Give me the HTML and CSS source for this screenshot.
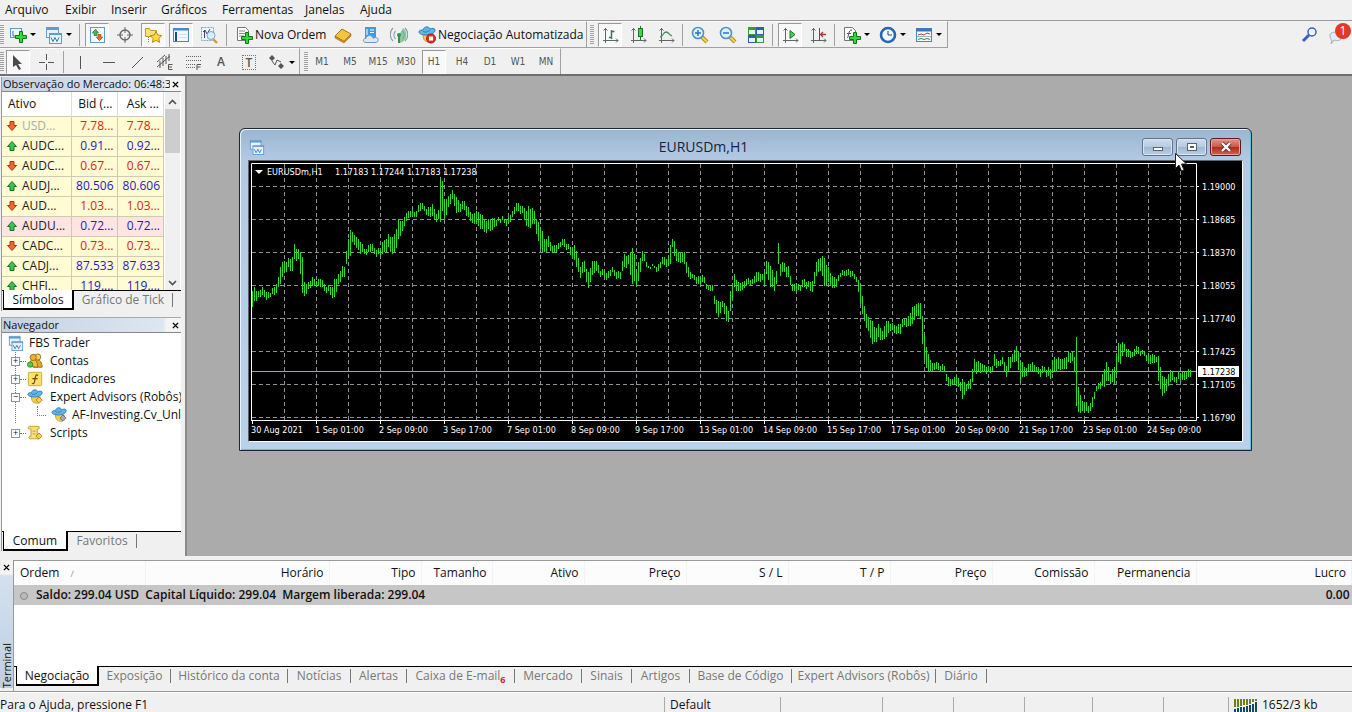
FILE: index.html
```html
<!DOCTYPE html>
<html lang="pt">
<head>
<meta charset="utf-8">
<title>FBS Trader</title>
<link rel="stylesheet" href="styles.css">
</head>
<body>
<svg class="defs" aria-hidden="true">
  <symbol id="plus" viewBox="0 0 12 12"><path d="M4.500 .5h3v4h4v3h-4v4h-3v-4h-4v-3h4z" fill="#35d83c" stroke="#0b7a17"/></symbol>
  <symbol id="bars" viewBox="0 0 18 18"><path d="M4.500 2v15M2 14.500h15M2.500 4.500l2-2 2 2M15 12.500l2 2-2 2" fill="none" stroke="#5a6a66"/></symbol>
  <symbol id="charts" viewBox="0 0 18 18"><rect x="1.500" y="1.500" width="12" height="10" fill="#e6f3fd" stroke="#5d9bd0"/><path d="M1 3h13" stroke="#5d9bd0" stroke-width="2"/><rect x="4.500" y="7.500" width="12" height="10" fill="#e6f3fd" stroke="#5d9bd0"/><path d="M4 8.500h13" stroke="#5d9bd0"/><path d="M6 11.500l2 4 2-4 2 4 2-4" fill="none" stroke="#3e78b4"/></symbol>
  <symbol id="hat" viewBox="0 0 18 18"><path d="M5 8c0 6 2 8 6 8 3 0 4-3 4-7z" fill="#f4cf4a" stroke="#c69a2c"/><path d="M1 6c0-2 3-2 4-2 1-4 6-4 7-1 2-1 5-1 5 1 0 4-6 5-9 5S1 8 1 6z" fill="#62b4e6" stroke="#2d7cb8"/><path d="M5 5c2 2 5 1 7-1" fill="none" stroke="#2d7cb8"/></symbol>
  <symbol id="down" viewBox="0 0 10 10"><path d="M3 .5h4v4h2.500L5 9.500.5 4.500H3z" fill="#ee6a34" stroke="#a8370e"/></symbol>
  <symbol id="up" viewBox="0 0 10 10"><path d="M3 9.500h4v-4h2.500L5 .5.5 5.500H3z" fill="#3fbf55" stroke="#12762a"/></symbol>
  <symbol id="lens" viewBox="0 0 18 18"><path d="M11 11l5 5" stroke="#b88a1c" stroke-width="4"/><path d="M11 11l5 5" stroke="#f2d25a" stroke-width="2"/><circle cx="7" cy="7" r="5.500" fill="#dff1fd" stroke="#4a93cf" stroke-width="1.600"/></symbol>
</svg>

<div class="app">
  <nav class="menubar">
    <button>Arquivo</button><button>Exibir</button><button>Inserir</button><button>Gráficos</button><button>Ferramentas</button><button>Janelas</button><button>Ajuda</button>
  </nav>

  <div class="toolrow toolrow-main">
    <div class="toolgroup first">
      <i class="grip"></i>
      <button class="tool drop" aria-label="Novo gráfico"><svg class="ic" viewBox="0 0 18 18"><rect x="1.500" y="2.500" width="11" height="9" fill="#edf6fd" stroke="#5d9bd0"/><path d="M4 5v5h6" fill="none" stroke="#3e78b4"/><use href="#plus" x="6" y="5" width="12" height="12"/></svg><i class="caret"></i></button>
      <button class="tool drop" aria-label="Perfis"><svg class="ic"><use href="#charts"/></svg><i class="caret"></i></button>
      <i class="sep"></i>
      <button class="tool on" aria-label="Observação do Mercado"><svg class="ic" viewBox="0 0 18 18"><rect x="2.500" y="1.500" width="14" height="15" fill="#f6fbff" stroke="#5d9bd0"/><use href="#up" x="4" y="3" width="7" height="7"/><use href="#down" x="8" y="8" width="7" height="7"/></svg></button>
      <button class="tool" aria-label="Janela de dados"><svg class="ic" viewBox="0 0 18 18"><circle cx="9" cy="9" r="5" fill="none" stroke="#666" stroke-width="1.400"/><path d="M9 1v6M9 11v6M1 9h6M11 9h6" stroke="#666"/></svg></button>
      <button class="tool on" aria-label="Navegador"><svg class="ic" viewBox="0 0 18 18"><path d="M1.500 10.500v-8h4l1 2h6v6z" fill="#f9e17a" stroke="#c39a26"/><path d="M4.500 11v6" stroke="#777" stroke-dasharray="1 1"/><path d="M12 5.500l1.800 3.500 4 .6-3 2.800.8 4-3.600-2-3.600 2 .8-4-3-2.800 4-.6z" fill="#ffd93b" stroke="#b88a1c"/></svg></button>
      <button class="tool on" aria-label="Terminal"><svg class="ic" viewBox="0 0 18 18"><rect x="1.500" y="2.500" width="15" height="13" fill="#f2f8ff" stroke="#4a88cc"/><path d="M2 3.500h14" stroke="#4a88cc" stroke-width="2"/><path d="M4 6v9" stroke="#1d4a94" stroke-width="2"/><path d="M7 8.500h8M7 11.500h8" stroke="#cfdff0"/></svg></button>
      <button class="tool" aria-label="Testador"><svg class="ic" viewBox="0 0 18 18"><rect x="1.500" y="1.500" width="12" height="13" fill="#edf4fb" stroke="#7aa3cb" stroke-dasharray="2 1"/><path d="M4.500 4v8M3 6l2-2 2 4 3-5" fill="none" stroke="#446"/><path d="M13 13l4 4" stroke="#c9a227" stroke-width="2.400"/><circle cx="11" cy="9.500" r="4" fill="#d8edfb" stroke="#7aa3cb"/></svg></button>
      <i class="sep"></i>
      <button class="tool wide order"><svg class="ic" viewBox="0 0 18 18"><path d="M2.500 1.500h8l3 3v10h-11z" fill="#fff" stroke="#777"/><path d="M4 5h6M4 7.500h7M4 10h5" stroke="#888"/><use href="#plus" x="6" y="6" width="12" height="12"/></svg><span>Nova Ordem</span></button>
      <button class="tool" aria-label="MetaEditor"><svg class="ic" viewBox="0 0 18 18"><path d="M1 10l7-7 9 5-7 8z" fill="#f3c53c" stroke="#a8741a"/><path d="M1 10v2l9 5 7-7V8l-7 7z" fill="#c98d1f" stroke="#a8741a" stroke-width=".6"/></svg></button>
      <button class="tool" aria-label="Nuvem"><svg class="ic" viewBox="0 0 18 18"><rect x="3" y="1" width="11" height="11" fill="#3c9be3"/><path d="M5 3v6M8 4h4M8 6.500h4" stroke="#fff"/><path d="M4 16.500c-4 0-3-5 0-4 0-4 7-4 7 0 2-2 6-1 5 2 0 2-2 2-3 2z" fill="#dbe8f4" stroke="#7397bb"/></svg></button>
      <button class="tool" aria-label="Sinais"><svg class="ic" viewBox="0 0 18 18"><path d="M9 9v8c9-1 9-12 4-15z" fill="#8fc79a"/><circle cx="9" cy="9" r="2" fill="#2c9547"/><path d="M5.500 5a6 6 0 0 0 0 8M12.500 5a6 6 0 0 1 0 8M3 2a9 9 0 0 0 0 13M15 2a9 9 0 0 1 0 13" fill="none" stroke="#7fa3b5" stroke-width="1.200"/><path d="M9 10v7" stroke="#2c9547" stroke-width="2"/></svg></button>
      <button class="tool wide auto"><svg class="ic" viewBox="0 0 18 18"><use href="#hat"/><circle cx="13" cy="12.500" r="4.500" fill="#dd3526" stroke="#991b12"/><rect x="11" y="10.500" width="4" height="4" fill="#fff"/></svg><span>Negociação Automatizada</span></button>
    </div>
    <div class="toolgroup second">
      <i class="grip"></i>
      <button class="tool on" aria-label="Gráfico de barras"><svg class="ic" viewBox="0 0 18 18"><use href="#bars"/><path d="M10.500 4v9M10.500 5.500h3M8 11.500h3" stroke="#3d7a50" stroke-width="1.500"/></svg></button>
      <button class="tool" aria-label="Candles"><svg class="ic" viewBox="0 0 18 18"><use href="#bars"/><path d="M11.500 0v14" stroke="#17772a"/><rect x="9.500" y="2.500" width="4" height="8" fill="#39d549" stroke="#17772a"/></svg></button>
      <button class="tool" aria-label="Linha"><svg class="ic" viewBox="0 0 18 18"><use href="#bars"/><path d="M3 11c3 0 3-5 6-5s3 3 6 4" fill="none" stroke="#4c8a5c" stroke-width="1.300"/></svg></button>
      <i class="sep"></i>
      <button class="tool" aria-label="Ampliar"><svg class="ic" viewBox="0 0 18 18"><use href="#lens"/><path d="M4 7h6M7 4v6" stroke="#2f73b5" stroke-width="1.500"/></svg></button>
      <button class="tool" aria-label="Reduzir"><svg class="ic" viewBox="0 0 18 18"><use href="#lens"/><path d="M4 7h6" stroke="#2f73b5" stroke-width="1.500"/></svg></button>
      <button class="tool" aria-label="Organizar janelas"><svg class="ic" viewBox="0 0 18 18"><path d="M1 1h8v8H1zM9 9h8v8H9z" fill="#3a9a35"/><path d="M9 1h8v8H9zM1 9h8v8H1z" fill="#2c5fb0"/><path d="M2 4h6v4H2zM10 4h6v4h-6zM2 12h6v4H2zM10 12h6v4h-6z" fill="#e9f2f4"/></svg></button>
      <i class="sep"></i>
      <button class="tool on" aria-label="Rolagem automática"><svg class="ic" viewBox="0 0 18 18"><use href="#bars"/><path d="M9 4.500l5 4-5 4z" fill="#3ecf4c" stroke="#207a2c"/></svg></button>
      <button class="tool" aria-label="Deslocar gráfico"><svg class="ic" viewBox="0 0 18 18"><use href="#bars"/><path d="M10.500 2v13" stroke="#555"/><path d="M17 8.500h-5M14 6l-2.500 2.500L14 11" fill="none" stroke="#b5372a" stroke-width="1.300"/></svg></button>
      <i class="sep"></i>
      <button class="tool drop" aria-label="Indicadores"><svg class="ic" viewBox="0 0 18 18"><path d="M1.500 1.500h8l3 3v10h-11z" fill="#fff" stroke="#6b7a77"/><path d="M4 12c2 0 1-9 5-8M4 7.500h4" fill="none" stroke="#555"/><use href="#plus" x="6" y="6" width="12" height="12"/></svg><i class="caret"></i></button>
      <button class="tool drop" aria-label="Períodos"><svg class="ic" viewBox="0 0 18 18"><circle cx="9" cy="9" r="7" fill="#f1f8fd" stroke="#2666b4" stroke-width="2.600"/><path d="M9 5v4h4" fill="none" stroke="#445"/></svg><i class="caret"></i></button>
      <button class="tool drop" aria-label="Modelos"><svg class="ic" viewBox="0 0 18 18"><rect x="1.500" y="2.500" width="15" height="13" fill="#f7fbff" stroke="#4b86c5"/><path d="M1 4h16" stroke="#3c74b4" stroke-width="3"/><path d="M3 9l3-1 3 1 3-2 3 1" fill="none" stroke="#a2463d"/><path d="M2 10.500h14" stroke="#9bb"/><path d="M3 13.500l3-1 3 1 3-1 3 1" fill="none" stroke="#3b8a48"/></svg><i class="caret"></i></button>
    </div>
    <div class="corner">
      <button class="tool" aria-label="Buscar"><svg class="ic" viewBox="0 0 18 18"><circle cx="11" cy="6" r="4" fill="#eef3ff" stroke="#3f5fc0" stroke-width="1.500"/><path d="M8 9l-6 6" stroke="#3f5fc0" stroke-width="3"/></svg></button>
      <button class="tool notice" aria-label="Mensagens"><svg class="ic" viewBox="0 0 18 18"><path d="M1 9c0-4 12-4 12 1s-5 5-8 4l-3 4 1-4c-1 0-2-2-2-5z" fill="#e6eaf0" stroke="#a3adba"/></svg><b class="badge">1</b></button>
    </div>
  </div>

  <div class="toolrow toolrow-draw">
    <div class="toolgroup lines">
      <i class="grip"></i>
      <button class="tool on" aria-label="Cursor"><svg class="ic" viewBox="0 0 18 18"><path d="M4 2v12l3-2 3 5 2-1-3-5h4z" fill="#4a4a4a"/></svg></button>
      <button class="tool" aria-label="Mira"><svg class="ic" viewBox="0 0 18 18"><path d="M9.500 1v6M9.500 11v6M2 9.500h6M11 9.500h6" stroke="#555"/></svg></button>
      <i class="sep"></i>
      <button class="tool" aria-label="Linha vertical"><svg class="ic" viewBox="0 0 18 18"><path d="M8.500 3v13" stroke="#555"/></svg></button>
      <button class="tool" aria-label="Linha horizontal"><svg class="ic" viewBox="0 0 18 18"><path d="M3 9.500h12" stroke="#555"/></svg></button>
      <button class="tool" aria-label="Linha de tendência"><svg class="ic" viewBox="0 0 18 18"><path d="M4 15L15 4" stroke="#555"/></svg></button>
      <button class="tool" aria-label="Canal"><svg class="ic" viewBox="0 0 18 18"><path d="M1 14L14 3M1 9l8-7M4 8v7M7 5v8M10 3v8M13 1v7" stroke="#555"/><path d="M16.500 11.500h-4v5h4M12.500 14h3.500" fill="none" stroke="#555"/></svg></button>
      <button class="tool" aria-label="Fibonacci"><svg class="ic" viewBox="0 0 18 18"><path d="M2 3.500h15M2 7.500h15M2 11.500h9M2 14.500h9" stroke="#666" stroke-dasharray="1 1"/><path d="M17 11.500h-4V17M13 14h3.500" fill="none" stroke="#555"/></svg></button>
      <button class="tool glyph">A</button>
      <button class="tool glyph"><span class="framed">T</span></button>
      <button class="tool drop" aria-label="Setas"><svg class="ic" viewBox="0 0 18 18"><path d="M4 2l3 3-3 3-3-3zM13 10l3 3-3 3-3-3z" fill="#555"/><path d="M4 8l3 4 2-5M9 7l4 2" fill="none" stroke="#555"/></svg><i class="caret"></i></button>
    </div>
    <div class="toolgroup periods">
      <i class="grip"></i>
      <button class="tool">M1</button><button class="tool">M5</button><button class="tool">M15</button><button class="tool">M30</button><button class="tool on">H1</button><button class="tool">H4</button><button class="tool">D1</button><button class="tool">W1</button><button class="tool">MN</button>
    </div>
  </div>

  <main class="work">
    <aside class="side">
      <section class="panel market">
        <header class="caption"><h2>Observação do Mercado: 06:48:37</h2><button class="shut" aria-label="Fechar"><svg viewBox="0 0 8 8"><path d="M1 1l6 6M7 1L1 7" stroke="#000" stroke-width="1.600"/></svg></button></header>
        <div class="quotes">
          <table class="symbols">
            <thead><tr><th>Ativo</th><th>Bid (...</th><th>Ask ...</th></tr></thead>
            <tbody>
              <tr class="fall idle"><td><svg class="dir"><use href="#down"/></svg>USD...</td><td>7.78...</td><td>7.78...</td></tr>
              <tr><td><svg class="dir"><use href="#up"/></svg>AUDC...</td><td>0.91...</td><td>0.92...</td></tr>
              <tr class="fall"><td><svg class="dir"><use href="#down"/></svg>AUDC...</td><td>0.67...</td><td>0.67...</td></tr>
              <tr><td><svg class="dir"><use href="#up"/></svg>AUDJ...</td><td>80.506</td><td>80.606</td></tr>
              <tr class="fall"><td><svg class="dir"><use href="#down"/></svg>AUD...</td><td>1.03...</td><td>1.03...</td></tr>
              <tr class="hot"><td><svg class="dir"><use href="#up"/></svg>AUDU...</td><td>0.72...</td><td>0.72...</td></tr>
              <tr class="fall"><td><svg class="dir"><use href="#down"/></svg>CADC...</td><td>0.73...</td><td>0.73...</td></tr>
              <tr><td><svg class="dir"><use href="#up"/></svg>CADJ...</td><td>87.533</td><td>87.633</td></tr>
              <tr><td><svg class="dir"><use href="#up"/></svg>CHFJ...</td><td>119....</td><td>119....</td></tr>
            </tbody>
          </table>
          <div class="scroll"><svg viewBox="0 0 9 6"><path d="M1 5l3.500-3.500L8 5" fill="none" stroke="#505050" stroke-width="1.600"/></svg><i class="thumb"></i><svg viewBox="0 0 9 6"><path d="M1 1l3.500 3.500L8 1" fill="none" stroke="#505050" stroke-width="1.600"/></svg></div>
        </div>
        <div class="tabs market-tabs"><button class="tab current">Símbolos</button><button class="tab">Gráfico de Tick</button></div>
      </section>

      <section class="panel navigator">
        <header class="caption"><h2>Navegador</h2><button class="shut" aria-label="Fechar"><svg viewBox="0 0 8 8"><path d="M1 1l6 6M7 1L1 7" stroke="#000" stroke-width="1.600"/></svg></button></header>
        <ul class="tree">
          <li class="root"><svg class="ti"><use href="#charts"/></svg>FBS Trader</li>
          <li><i class="box">+</i><svg class="ti" viewBox="0 0 18 18"><path d="M7 16c-2-8 1-9 3-9s7 1 7 9z" fill="#e2a927" stroke="#976913"/><circle cx="12" cy="4.500" r="3.500" fill="#f5d05a" stroke="#976913"/><path d="M3 15c0-6 2-8 4-8s5 2 5 9z" fill="#f2c13b" stroke="#976913"/><circle cx="7" cy="5" r="3.500" fill="#e7b238" stroke="#976913"/><circle cx="3.500" cy="13" r="3" fill="#52cf46" stroke="#1f8a26"/></svg>Contas</li>
          <li><i class="box">+</i><svg class="ti" viewBox="0 0 18 18"><rect x="1.500" y="1.500" width="15" height="15" rx="1" fill="#fbe06c" stroke="#c8a436"/><path d="M12.500 5c-3-2-3 1-4 7-.5 3-2 2-3 2M6 8.500h6" fill="none" stroke="#6b4c10" stroke-width="1.400"/></svg>Indicadores</li>
          <li><i class="box">−</i><svg class="ti" viewBox="0 0 18 18"><use href="#hat"/><path d="M13.500 9l3.500 3.500-3.500 3.500-3.500-3.500z" fill="#f7cf48" stroke="#b08318"/></svg>Expert Advisors (Robôs)</li>
          <li class="leaf"><svg class="ti" viewBox="0 0 18 18"><use href="#hat"/><path d="M13.500 9l3.500 3.500-3.500 3.500-3.500-3.500z" fill="#aaa" stroke="#6c6c6c"/></svg>AF-Investing.Cv_Unlimited</li>
          <li class="last"><i class="box">+</i><svg class="ti" viewBox="0 0 18 18"><path d="M2.500 1.500h10c2 0 2 3 0 3h-1v8l2 3h-10c-2 0-2-3 0-3h1v-8h-2c-2 0-1-3 0-3z" fill="#f8df7c" stroke="#bd962a"/><path d="M6.500 7h3M6.500 10h3" stroke="#bd962a"/><path d="M13.500 9l3.500 3.500-3.500 3.500-3.500-3.500z" fill="#f7cf48" stroke="#b08318"/></svg>Scripts</li>
        </ul>
        <div class="tabs nav-tabs"><button class="tab current">Comum</button><button class="tab">Favoritos</button></div>
      </section>
    </aside>

    <div class="desktop">
      <article class="window">
        <header class="titlebar">
          <svg class="ti"><use href="#charts"/></svg>
          <h1>EURUSDm,H1</h1>
          <button class="wb" aria-label="Minimizar"><svg viewBox="0 0 12 10"><rect x="1.500" y="5.500" width="9" height="3" fill="#fff" stroke="#566273"/></svg></button>
          <button class="wb" aria-label="Maximizar"><svg viewBox="0 0 12 10"><rect x="1.500" y="1.500" width="9" height="7" fill="#fff" stroke="#566273"/><rect x="4.500" y="4.500" width="3" height="1" fill="#fff" stroke="#566273"/></svg></button>
          <button class="wb close" aria-label="Fechar"><svg viewBox="0 0 12 10"><path d="M2 1l8 8M10 1L2 9" stroke="#6b2a26" stroke-width="4"/><path d="M2 1l8 8M10 1L2 9" stroke="#fff" stroke-width="2.400"/></svg></button>
        </header>
        <svg class="chart" id="chart" viewBox="0 0 993 280" width="993" height="280"></svg>
      </article>
      <svg class="pointer" viewBox="0 0 12 19"><path d="M.5.500v15l3.500-3.500 2.500 6 2.500-1-2.500-6h5z" fill="#fff" stroke="#222"/></svg>
    </div>
  </main>

  <section class="terminal">
    <div class="spine"><button class="shut" aria-label="Fechar"><svg viewBox="0 0 8 8"><path d="M1 1l6 6M7 1L1 7" stroke="#000" stroke-width="1.600"/></svg></button><h2>Terminal</h2></div>
    <div class="ledger">
      <table class="orders">
        <colgroup><col class="c-order"><col class="c-time"><col class="c-short"><col class="c-size"><col class="c-short"><col class="c-mid"><col class="c-mid"><col class="c-mid"><col class="c-mid"><col class="c-mid"><col class="c-mid"><col></colgroup>
        <thead><tr><th>Ordem <span class="sort">∕</span></th><th>Horário</th><th>Tipo</th><th>Tamanho</th><th>Ativo</th><th>Preço</th><th>S / L</th><th>T / P</th><th>Preço</th><th>Comissão</th><th>Permanencia</th><th>Lucro</th></tr></thead>
        <tbody><tr><td colspan="11"><i class="dot"></i>Saldo: 299.04 USD&nbsp; Capital Líquido: 299.04&nbsp; Margem liberada: 299.04</td><td>0.00</td></tr></tbody>
      </table>
      <div class="tabs term-tabs">
        <button class="tab current">Negociação</button><button class="tab">Exposição</button><button class="tab">Histórico da conta</button><button class="tab">Notícias</button><button class="tab">Alertas</button><button class="tab mail">Caixa de E-mail<sub>6</sub></button><button class="tab">Mercado</button><button class="tab">Sinais</button><button class="tab">Artigos</button><button class="tab">Base de Código</button><button class="tab">Expert Advisors (Robôs)</button><button class="tab">Diário</button>
      </div>
    </div>
  </section>

  <footer class="status">
    <span>Para o Ajuda, pressione F1</span><span>Default</span><span></span><span></span><span></span><span></span><span></span><span></span>
    <span class="net"><svg viewBox="0 0 24 14"><path d="M1 1v8M4 1v8M7 1v7M10 1v6M13 1v6M16 1v5M19 1v3M22 1v2" stroke="#6b8210" stroke-width="2"/><path d="M1 11v3M4 10v4M7 9v5M10 9v5M13 8v6M16 7v7M19 6v8M22 4v10" stroke="#124a66" stroke-width="2"/></svg>1652/3 kb</span>
  </footer>
</div>
<script src="chart.js"></script>
</body>
</html>
```
FILE: styles.css
```css
* { box-sizing: border-box; }
body { margin: 0; background: #f0f0f0; color: #111; font: 12px/16px "Open Sans", "Noto Sans", sans-serif; }
button { margin: 0; padding: 0; border: 0; background: none; color: inherit; font: inherit; white-space: nowrap; }
h1, h2 { margin: 0; font-weight: 400; }
i { font-style: normal; }
svg { display: block; flex: none; }
.defs { position: absolute; width: 0; height: 0; }
.app { display: flex; flex-direction: column; min-height: 100vh; }

.menubar { display: grid; grid-template-columns: 60px 46px 50px 61px 83px 55px 40px; padding: 2px 0 2px 5px; border-bottom: 1px solid #9c9c9c; }
.menubar button { text-align: left; }

.toolrow { display: flex; height: 27px; }
.toolrow-draw { height: 28px; border-bottom: 2px solid #6e6e6e; }
.toolgroup { display: flex; align-items: center; border-top: 1px solid #fff; border-right: 1px solid #a0a0a0; border-bottom: 1px solid #a0a0a0; padding-right: 1px; }
.toolrow-draw .toolgroup { padding: 1px 0 0; border-bottom: 0; }
.toolrow-draw .periods { padding-left: 3px; }
.second { padding-left: 3px; }
.grip { width: 4px; height: 20px; background: repeating-linear-gradient(#a2a2a2 0 1px, #f0f0f0 1px 2px); }
.lines { margin-right: 1px; }
.second .grip { margin-right: 2px; }
.sep { width: 1px; height: 22px; margin: 0 3px; background: #a0a0a0; }
.second .sep { margin: 0 3px 0 2px; }
.tool { display: flex; align-items: center; justify-content: center; gap: 4px; width: 24px; height: 24px; margin: 0 2px; border: 1px solid transparent; color: #555; }
.tool.on { background: #f8f8f8; border-color: #999 #fff #fff #999; }
.tool.drop { width: 32px; gap: 3px; justify-content: flex-start; padding-left: 2px; }
.tool.wide { justify-content: flex-start; padding-left: 2px; color: #111; gap: 2px; }
.order { width: 95px; }
.auto { width: 168px; }
.ic { width: 18px; height: 18px; }
.caret { width: 0; border: 3px solid transparent; border-top-color: #000; border-bottom: 0; }
.glyph { font-weight: 600; }
.framed { width: 14px; line-height: 13px; border: 1px dotted #777; }
.periods .tool { font: 10px/12px "DejaVu Sans Condensed", "DejaVu Sans", sans-serif; }
.corner { display: flex; align-items: center; margin-left: auto; }
.notice { position: relative; }
.badge { position: absolute; top: -1px; right: -2px; width: 16px; height: 16px; border-radius: 8px; background: #e03a24; color: #fff; font-weight: 400; line-height: 16px; }

.work { display: flex; flex: 1; min-height: 480px; }
.side { display: flex; flex-direction: column; gap: 6px; width: 187px; padding: 1px 4px 5px 1px; border-right: 2px solid #8a8a8a; }
.panel { display: flex; flex-direction: column; border-left: 1px solid #999; min-width: 0; }
.market { height: 234px; }
.navigator { flex: 1; border-top: 1px solid #aaa; }
.caption { display: flex; align-items: center; height: 14px; background: linear-gradient(90deg, #c3d1e1, #dde7f2 90%, #f4f4f4 92%); }
.caption h2 { flex: 1; min-width: 0; padding-left: 1px; overflow: hidden; font-size: 11px; line-height: 14px; white-space: nowrap; }
.shut { display: grid; place-items: center; width: 11px; height: 14px; background: #f4f4f4; }
.shut svg { width: 7px; height: 7px; }
.quotes { display: flex; flex: 1; min-height: 0; overflow: hidden; background: #fff; border-top: 1px solid #888; border-bottom: 1px solid #000; }
table { border-collapse: collapse; }
.symbols { table-layout: fixed; width: 162px; height: 203px; }
.symbols th { height: 24px; padding: 0 4px 0 0; border-right: 1px solid #ddd; font-weight: 400; text-align: right; white-space: nowrap; }
.symbols th:first-child { width: 69px; text-align: left; padding-left: 6px; }
.symbols th:nth-child(2) { width: 46px; }
.symbols td { height: 20px; padding: 0 3px 0 0; border: solid #cfcbb0; border-width: 1px 1px 0 0; background: #fffbd2; color: #2a16c8; line-height: 18px; text-align: right; white-space: nowrap; }
.symbols td:first-child { color: #222; padding-left: 5px; text-align: left; }
.symbols .fall td { color: #dc2418; }
.symbols .fall td:first-child { color: #222; }
.symbols .idle td:first-child { color: #aaa; }
.symbols .hot td { background: #ffe4e1; }
.dir { display: inline-block; width: 10px; height: 10px; margin-right: 5px; vertical-align: -1px; }
.scroll { display: flex; flex-direction: column; align-items: center; justify-content: space-between; width: 15px; margin-left: 1px; padding: 7px 0 4px; background: #f0f0f0; }
.scroll svg { width: 9px; height: 6px; }
.thumb { width: 15px; height: 44px; margin: 4px 0 auto; background: #cdcdcd; }

.tabs { display: grid; height: 20px; }
.tab { height: 14px; margin-top: 2px; border-right: 1px solid #777; color: #777; line-height: 14px; }
.tab.current { height: 20px; margin-top: -1px; padding-top: 2px; background: #fff; border: 2px solid #000; border-width: 0 2px 2px 1px; color: #111; line-height: 16px; }
.market-tabs { grid-template-columns: 71px 99px; padding-left: 1px; }
.nav-tabs { grid-template-columns: 65px 69px; padding-left: 1px; border-top: 1px solid #000; }

.tree { flex: 1; margin: 0; padding: 1px 0 0 5px; list-style: none; overflow: hidden; background: #fff; border-top: 1px solid #888; }
.tree li { display: flex; align-items: center; gap: 7px; height: 18px; padding-left: 4px; white-space: nowrap; background: repeating-linear-gradient(transparent 0 1px, #fff 1px 2px), linear-gradient(90deg, transparent 8px, #777 8px, #777 9px, transparent 9px); }
.tree .root { padding-left: 1px; gap: 5px; background: none; }
.tree .last { background: none; }
.tree .leaf { padding-left: 30px; gap: 5px; }
.leaf::before { content: ""; flex: none; width: 8px; height: 9px; margin-bottom: 9px; border: dotted #777; border-width: 0 0 1px 1px; }
.ti { width: 16px; height: 16px; }
.box { position: relative; flex: none; width: 9px; height: 9px; border: 1px solid #8a94a4; background: #fff; font-size: 9px; line-height: 6px; text-align: center; }
.box::after { content: ""; position: absolute; top: 3px; left: 8px; width: 6px; border-top: 1px dotted #777; }

.desktop { position: relative; flex: 1; overflow: hidden; background: #ababab; }
.window { position: absolute; top: 52px; left: 52px; padding: 0 8px 8px; background: linear-gradient(#9bb5cf, #b4cae4 32px, #b9d1ea); border: 1px solid #1c2833; border-radius: 6px 6px 0 0; box-shadow: inset 1px 1px #e8f2fb, inset -1px -1px #55c4dc; }
.titlebar { display: flex; align-items: center; gap: 3px; height: 31px; padding: 5px 2px 0 1px; }
.titlebar h1 { flex: 1; color: #16243a; font-size: 14px; line-height: 20px; text-align: center; }
.wb { display: grid; place-items: center; width: 31px; height: 18px; border: 1px solid #5d738e; border-radius: 3px; background: linear-gradient(#cfddec, #b7cbe0 48%, #9fb8d3 52%, #b9cfe6); box-shadow: inset 0 0 0 1px #d9e6f2; }
.wb svg { width: 12px; height: 10px; }
.close { border-color: #5e1a1a; background: linear-gradient(#dc978c, #cb5949 48%, #b5281c 52%, #cf6650); box-shadow: inset 0 0 0 1px #e6a49a; }
.chart { background: #000; border: 1px solid #fff; border-color: #59636e #fff #fff #59636e; box-sizing: content-box; font: 9px "DejaVu Sans Condensed", "DejaVu Sans", sans-serif; }
.chart text { fill: #fff; }
.chart .tag { fill: #000; }
.grid { fill: none; stroke: #8b939b; stroke-dasharray: 4 3; }
.now { stroke: #9aa4ae; }
.frame { fill: none; stroke: #fff; }
.price { stroke: #2bdc2b; }
.pointer { position: absolute; top: 77px; left: 988px; width: 12px; height: 19px; }

.terminal { display: flex; height: 136px; padding-top: 4px; background: #f0f0f0; border-bottom: 1px solid #999; }
.spine { display: flex; flex-direction: column; align-items: center; justify-content: space-between; width: 13px; margin-bottom: 3px; background: linear-gradient(#f0f0f0 14px, #d3e0ee 16px, #bfcfe1); }
.spine h2 { writing-mode: vertical-rl; transform: rotate(180deg); font-size: 11px; line-height: 13px; }
.ledger { display: flex; flex: 1; flex-direction: column; min-width: 0; background: linear-gradient(#fff 106px, #f0f0f0 106px); border-top: 1px solid #999; border-left: 1px solid #999; }
.orders { table-layout: fixed; width: 100%; background: #fff; }
.orders th { height: 24px; padding: 0 5px 0 0; background: #fcfcfd; border-right: 1px solid #f1f3f6; font-weight: 400; text-align: right; white-space: nowrap; }
.orders th:first-child { padding-left: 6px; text-align: left; }
.orders td { height: 20px; padding: 0 2px 0 6px; background: #c6c6c6; font-weight: 600; text-align: right; white-space: nowrap; }
.orders td:first-child { text-align: left; }
.c-order { width: 131px; } .c-time { width: 184px; } .c-short { width: 92px; } .c-size { width: 71px; } .c-mid { width: 102px; }
.sort { margin-left: 8px; color: #999; font-size: 9px; }
.dot { display: inline-block; width: 8px; height: 8px; margin-right: 8px; border: 1px solid #888; border-radius: 4px; background: #bbb; vertical-align: -1px; }
.term-tabs { grid-template-columns: 83px 72px 117px 63px 56px 108px 67px 50px 58px 102px 144px 51px; margin-top: auto; height: 25px; padding-left: 2px; border-top: 1px solid #000; }
.mail sub { color: #d8222a; font-size: 9px; font-weight: 700; line-height: 8px; }

.status { display: grid; grid-template-columns: 664px 116px 102px 71px 71px 68px 71px 65px 1fr; height: 20px; padding-top: 4px; border-top: 1px solid #fff; line-height: 15px; }
.status span { border-left: 1px solid #aaa; padding-left: 5px; white-space: nowrap; }
.status span:first-child { padding-left: 0; border-left: 0; }
.net { display: flex; align-items: center; gap: 4px; }
.net svg { width: 24px; height: 14px; }
```
FILE: chart.js
```js
// Turning points of the series: bar index, top and bottom of the range (thirds of a pixel).
const RANGES = [
[0,500,550],[1,490,530],[3,500,520],[5,490,512],[7,503,527],[9,508,520],[11,490,512],[13,460,490],[14,430,480],[16,412,448],[18,402,430],[19,405,440],[20,400,440],[21,360,405],[23,375,405],[24,385,450],[25,400,508],[26,475,515],[28,475,495],[30,460,485],[32,470,488],[34,465,490],[36,480,500],[38,483,500],[40,490,522],[41,465,518],[43,450,480],[45,427,460],[46,430,460],[47,380,420],[48,345,400],[49,318,395],[50,325,355],[52,340,372],[54,355,390],[56,375,390],[59,360,385],[61,372,390],[64,375,395],[65,355,390],[68,330,370],[70,340,390],[71,330,385],[73,285,345],[75,290,320],[77,268,290],[79,262,280],[81,265,280],[84,238,260],[86,245,260],[88,250,275],[90,240,275],[92,270,295],[93,258,285],[94,160,295],[95,170,262],[96,225,285],[98,215,250],[100,198,225],[102,220,268],[104,240,265],[106,232,258],[108,250,280],[110,270,298],[112,262,300],[114,270,315],[116,285,325],[118,285,315],[120,282,318],[123,280,292],[126,285,297],[128,280,300],[130,262,280],[132,238,262],[135,245,268],[137,260,305],[138,245,310],[139,255,312],[141,262,300],[143,295,350],[145,320,385],[146,345,385],[148,335,370],[150,365,388],[152,362,385],[154,355,370],[156,345,370],[158,360,375],[160,370,405],
[161,362,408],[162,380,430],[164,430,462],[166,410,445],[168,445,492],[170,412,452],[172,412,440],[174,440,460],[176,440,460],[178,440,462],[180,428,445],[182,445,465],[184,445,465],[186,390,430],[188,392,420],[190,372,480],[191,390,470],[192,440,485],[193,415,470],[195,380,410],[196,390,410],[198,425,433],[201,425,433],[203,420,440],[205,400,420],[208,400,425],[209,362,420],[210,345,370],[211,352,395],[213,385,415],[215,385,415],[216,385,420],[218,430,460],[220,450,462],[223,455,480],[226,460,478],[228,485,497],[230,483,500],[231,515,540],[233,530,580],[235,530,550],[237,545,590],[238,560,595],[239,500,560],[240,480,525],[241,450,490],[243,475,500],[245,475,498],[247,465,485],[250,465,480],[252,445,475],[255,450,468],[256,445,482],[257,410,450],[259,425,490],[261,460,500],[262,440,480],[263,358,420],[264,420,455],[266,418,445],[268,425,460],[270,480,500],[272,478,500],[274,485,500],[276,465,490],[278,470,490],[280,470,505],[282,415,455],[284,403,440],[286,403,485],[288,430,475],[290,455,492],[292,465,490],[294,448,460],[297,438,455],[300,440,455],[302,460,475],[304,480,540],[305,515,570],[306,545,590],[308,580,620],[310,590,660],[311,610,655],[313,600,640],[315,620,648],[317,590,640],[319,600,620],[322,605,630],[324,600,630],[326,582,602],
[328,575,605],[330,550,600],[332,540,575],[334,537,585],[335,575,660],[336,635,710],[338,690,742],[340,718,740],[342,715,735],[344,725,745],[346,725,745],[348,760,785],[350,765,780],[352,755,785],[354,775,800],[355,765,825],[357,780,800],[359,765,795],[360,735,775],[361,705,745],[363,710,740],[365,720,745],[368,725,745],[370,725,740],[371,690,725],[373,710,725],[375,700,720],[377,725,760],[378,700,740],[380,690,715],[382,665,710],[384,710,770],[386,730,760],[388,720,740],[390,715,740],[392,730,745],[394,735,760],[396,730,745],[399,735,765],[401,700,740],[403,700,735],[405,705,735],[407,700,735],[408,680,715],[410,685,710],[411,700,745],[412,640,845],[413,790,865],[415,830,862],[417,835,860],[418,845,868],[420,820,850],[422,785,800],[424,775,795],[426,735,790],[427,715,770],[429,750,780],[431,730,780],[432,690,750],[433,658,715],[434,660,720],[436,660,685],[438,675,700],[440,685,700],[442,665,690],[444,680,695],[446,685,697],[448,690,715],[450,690,718],[452,698,715],[453,695,770],[455,755,815],[457,765,800],[459,738,775],[461,760,775],[463,745,765],[465,745,768],[467,740,765],[469,738,758]];

const DATES = ["30 Aug 2021", "1 Sep 01:00", "2 Sep 09:00", "3 Sep 17:00", "7 Sep 01:00", "8 Sep 09:00", "9 Sep 17:00", "13 Sep 01:00", "14 Sep 09:00", "15 Sep 17:00", "17 Sep 01:00", "20 Sep 09:00", "21 Sep 17:00", "23 Sep 01:00", "24 Sep 09:00"];
const PRICES = ["1.19000", "1.18685", "1.18370", "1.18055", "1.17740", "1.17425", "1.17105", "1.16790"];

const chart = document.getElementById("chart");
function add(tag, attrs, text) {
  const el = document.createElementNS("http://www.w3.org/2000/svg", tag);
  for (const key in attrs) el.setAttribute(key, attrs[key]);
  if (text) el.textContent = text;
  chart.appendChild(el);
}

let grid = "";
for (let x = 35; x < 947; x += 32) grid += `M${x + .5} 3V259`;
for (let y = 25; y < 259; y += 33) grid += `M3 ${y + .5}H947`;
add("path", { d: grid, class: "grid" });
add("path", { d: "M3 210.5H947", class: "now" });

const scale = v => Math.round(v / 3 - 37);
let bars = "";
for (let k = 0; k < RANGES.length; k++) {
  const [i, hi, lo] = RANGES[k];
  const next = RANGES[k + 1] || [i + 1, hi, lo];
  for (let n = i; n < next[0]; n++) {
    const t = (n - i) / (next[0] - i);
    const wobble = t ? ((n * 7) % 5 - 2) * 3 : 0;
    const top = hi + (next[1] - hi) * t + wobble;
    const bottom = lo + (next[2] - lo) * t + wobble;
    bars += `M${3.5 + 2 * n} ${scale(top)}V${scale(bottom)}`;
  }
}
add("path", { d: bars, class: "price" });

let frame = "M2.5 259.5V2.5H947.5V259.5H2";
DATES.forEach((label, k) => {
  frame += `M${3.5 + 64 * k} 259V263`;
  add("text", { x: 2 + 64 * k, y: 272 }, label);
});
PRICES.forEach((label, k) => {
  frame += `M947 ${25.5 + 33 * k}H950`;
  add("text", { x: 953, y: 29 + 33 * k }, label);
});
add("path", { d: frame, class: "frame" });
add("rect", { x: 949, y: 205, width: 41, height: 11, fill: "#fff" });
add("text", { x: 953, y: 214, class: "tag" }, "1.17238");
add("path", { d: "M6 9h8l-4 4z", fill: "#fff" });
add("text", { x: 18, y: 14 }, "EURUSDm,H1");
add("text", { x: 86, y: 14 }, "1.17183 1.17244 1.17183 1.17238");
```
